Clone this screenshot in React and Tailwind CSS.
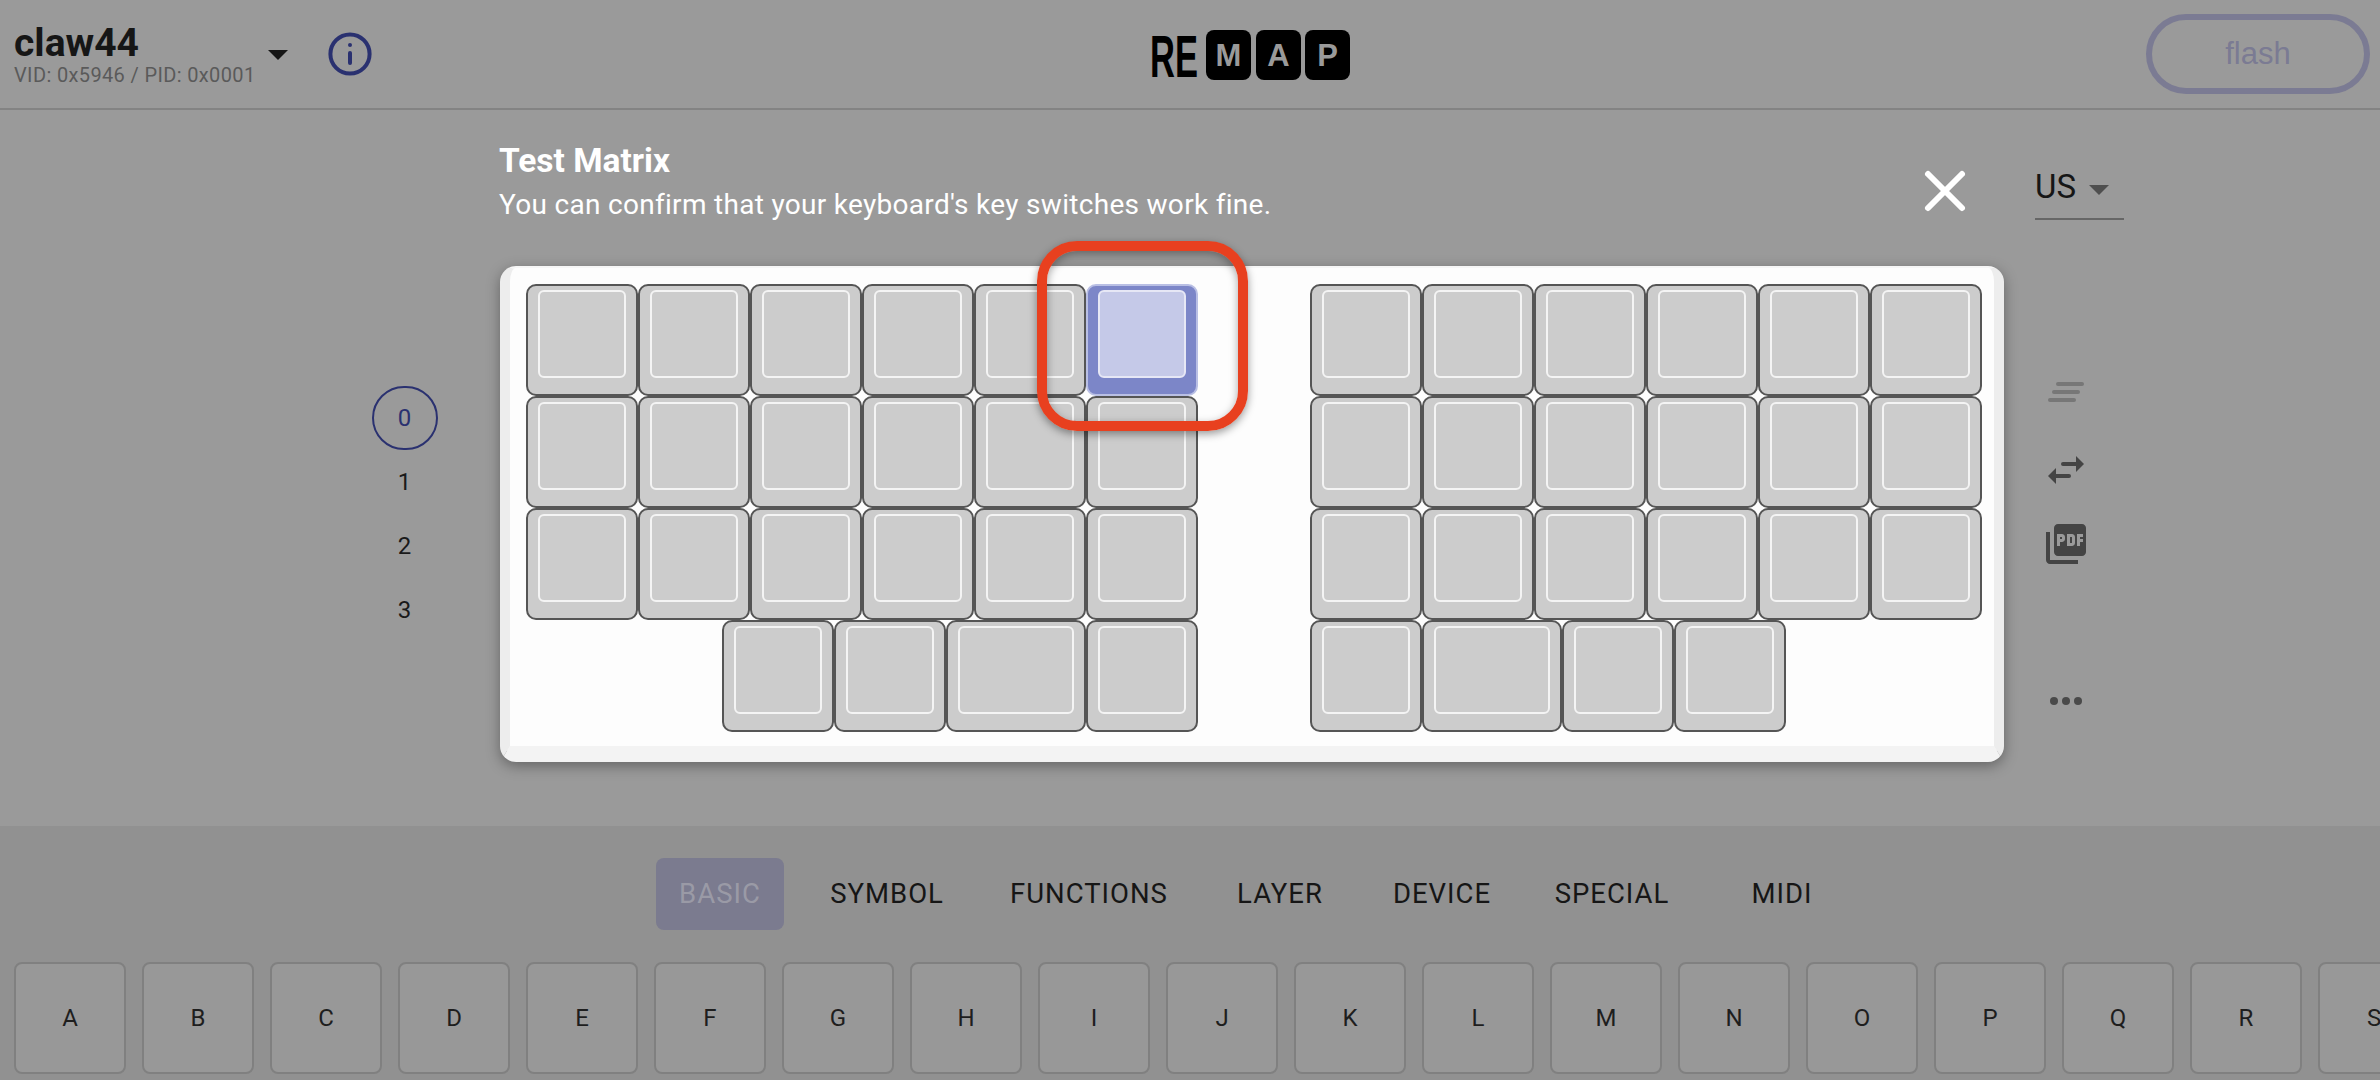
import React from 'react';
import { MdPictureAsPdf } from 'react-icons/md';

const FONT = { fontFamily: 'Roboto, "Noto Sans", sans-serif' };

const TABS = [
  { label: 'BASIC', w: 'w-[128px]', active: true },
  { label: 'SYMBOL', w: 'w-[206px]' },
  { label: 'FUNCTIONS', w: 'w-[198px]' },
  { label: 'LAYER', w: 'w-[184px]' },
  { label: 'DEVICE', w: 'w-[140px]' },
  { label: 'SPECIAL', w: 'w-[200px]' },
  { label: 'MIDI', w: 'w-[140px]' },
];

const LETTERS = 'ABCDEFGHIJKLMNOPQRS'.split('');

function Caret({ className, color = '#161616' }) {
  return (
    <svg width="20" height="10" viewBox="0 0 20 10" className={className}>
      <polygon points="0,0 20,0 10,10" fill={color} />
    </svg>
  );
}

function Key({ wide, lit }) {
  return (
    <div
      className={`flex h-[112px] shrink-0 justify-center rounded-[10px] pt-1 ${wide ? 'w-[140px]' : 'w-[112px]'} ${
        lit ? 'border-2 border-[#b9bfe4] bg-[#7c86c8]' : 'border-2 border-[#555555] bg-[#cccccc]'
      }`}
    >
      <div
        className={`h-[88px] rounded-[6px] border-2 ${wide ? 'w-[116px]' : 'w-[88px]'} ${
          lit ? 'border-[#e6e7f5] bg-[#c5c9e8]' : 'border-[#f4f4f4] bg-[#cccccc]'
        }`}
      />
    </div>
  );
}

function KeyRow({ keys, className = '' }) {
  return (
    <div className={`flex ${className}`}>
      {keys.map((k, i) => (
        <Key key={i} wide={k === 'w'} lit={k === 'l'} />
      ))}
    </div>
  );
}

function Logo() {
  return (
    <svg width="200" height="74" viewBox="0 -10 200 74" className="block">
      <text transform="translate(0 47) scale(0.575 1)" fontFamily="Liberation Sans" fontWeight="700" fontSize="60" fill="#000">
        RE
      </text>
      <rect x="56" y="0" width="45" height="50" rx="8" fill="#000" />
      <rect x="106" y="0" width="45" height="50" rx="8" fill="#000" />
      <rect x="155" y="0" width="45" height="50" rx="8" fill="#000" />
      <g fontFamily="Liberation Sans" fontWeight="700" fontSize="31" fill="#9a9a9a" textAnchor="middle">
        <text x="78.5" y="36">M</text>
        <text x="128.5" y="36">A</text>
        <text x="177.5" y="36">P</text>
      </g>
    </svg>
  );
}

export default function App() {
  return (
    <div className="relative flex h-[1080px] w-[2380px] flex-col overflow-hidden bg-[#9a9a9a]" style={FONT}>
      {/* header */}
      <header className="flex h-[110px] shrink-0 items-start border-b-2 border-[#838383] pl-[14px]">
        <div className="w-[254px] pt-[23px]">
          <div className="text-[39px] leading-[40px] font-bold text-[#161616]">claw44</div>
          <div className="text-[20px] leading-[24px] tracking-[0.36px] text-[#5a5a5a]">VID: 0x5946 / PID: 0x0001</div>
        </div>
        <Caret className="mt-[50px]" />
        <svg width="48" height="48" viewBox="0 0 24 24" fill="none" stroke="#2a3170" strokeWidth="2" strokeLinecap="round" className="mt-[30px] ml-[38px]">
          <circle cx="12" cy="12" r="9.8" />
          <path d="M12 11.5v5" />
          <path d="M12 7.5h.01" />
        </svg>
        <div className="mt-[20px] ml-[776px]">
          <Logo />
        </div>
        <button className="mt-[14px] ml-[796px] flex h-[80px] w-[224px] items-center justify-center rounded-[40px] border-[6px] border-[#7b7b93] text-[31px] text-[#7b7b93]" style={{ fontFamily: '"Liberation Sans", sans-serif' }}>
          flash
        </button>
      </header>

      {/* keymap area */}
      <main className="flex h-[716px] shrink-0">
        <div className="flex w-[500px] shrink-0 flex-col items-center pt-[276px] pl-[309px] text-[24px] text-[#1a1a1a]">
          <div className="flex h-[64px] w-[66px] items-center justify-center rounded-full border-2 border-[#2a3170] text-[#2a3170]">0</div>
          <div className="flex h-[64px] items-center">1</div>
          <div className="flex h-[64px] items-center">2</div>
          <div className="flex h-[64px] items-center">3</div>
        </div>

        <div className="w-[1504px] shrink-0">
          <div className="flex h-[156px] items-start justify-between">
            <div className="-ml-px pt-[33px]">
              <div className="text-[33.5px] leading-[36px] font-bold text-white">Test Matrix</div>
              <div className="mt-[8px] text-[28px] leading-[36px] tracking-[0.3px] text-white">You can confirm that your keyboard's key switches work fine.</div>
            </div>
            <svg width="44" height="44" viewBox="0 0 44 44" className="mt-[59px] mr-[37px]" stroke="#fff" strokeWidth="6" strokeLinecap="round">
              <path d="M5 5 L39 39 M39 5 L5 39" />
            </svg>
          </div>
          <div className="h-[496px] rounded-[16px] border-x-[10px] border-t-2 border-b-[16px] border-x-[#ededed] border-t-[#f6f6f6] border-b-[#f3f3f3] bg-[#fdfdfd] pt-4 pl-4 shadow-[0_4px_14px_rgba(0,0,0,0.35)]">
            <div className="flex gap-[112px]">
              <div className="w-[672px]">
                <KeyRow keys={['n', 'n', 'n', 'n', 'n', 'l']} />
                <KeyRow keys={['n', 'n', 'n', 'n', 'n', 'n']} />
                <KeyRow keys={['n', 'n', 'n', 'n', 'n', 'n']} />
                <KeyRow keys={['n', 'n', 'w', 'n']} className="justify-end" />
              </div>
              <div className="w-[672px]">
                <KeyRow keys={['n', 'n', 'n', 'n', 'n', 'n']} />
                <KeyRow keys={['n', 'n', 'n', 'n', 'n', 'n']} />
                <KeyRow keys={['n', 'n', 'n', 'n', 'n', 'n']} />
                <KeyRow keys={['n', 'w', 'n', 'n']} />
              </div>
            </div>
          </div>
        </div>

        <div className="w-[150px] shrink-0 pl-[31px]">
          <div className="mt-[52px] flex h-[58px] w-[89px] items-start border-b-2 border-[#666666] pt-px">
            <span className="text-[33px] leading-[48px] text-[#161616]">US</span>
            <Caret className="mt-[22px] ml-[13px]" color="#4f4f4f" />
          </div>
          <div className="mt-[161px] ml-[7px] flex w-[48px] flex-col items-center">
            <svg width="40" height="24" viewBox="0 0 40 24" stroke="#777777" strokeWidth="4" strokeLinecap="round">
              <path d="M12 3 H36 M8 11 H32 M4 19 H28" />
            </svg>
            <svg width="48" height="48" viewBox="0 0 24 24" fill="#444444" className="mt-[41px]">
              <path d="M7 11 3 15l4 4v-3h6.5a1 1 0 0 0 0-2H7v-3ZM21 9l-4-4v3h-6.5a1 1 0 0 0 0 2H17v3l4-4Z" />
            </svg>
            <MdPictureAsPdf size={48} color="#444444" className="mt-[26px]" />
            <svg width="48" height="12" viewBox="0 0 48 12" fill="#4a4a4a" className="mt-[127px]">
              <circle cx="12" cy="6" r="4" />
              <circle cx="24" cy="6" r="4" />
              <circle cx="36" cy="6" r="4" />
            </svg>
          </div>
        </div>
      </main>

      {/* key palette */}
      <section className="flex-1 bg-[#919191] pt-[32px]">
        <div className="flex pl-[656px]">
          {TABS.map((t) => (
            <div
              key={t.label}
              className={`flex h-[72px] items-center justify-center rounded-[8px] text-[27.5px] tracking-[1px] ${t.w} ${
                t.active ? 'bg-[#7b7b8f] text-[#9a9aa6]' : 'text-[#161616]'
              }`}
            >
              {t.label}
            </div>
          ))}
        </div>
        <div className="mt-[32px] flex gap-4 pl-[14px]">
          {LETTERS.map((c) => (
            <div key={c} className="flex h-[112px] w-[112px] shrink-0 items-center justify-center rounded-[8px] border-2 border-[#808080] bg-[#989898] text-[24px] text-[#1e1e1e]">
              {c}
            </div>
          ))}
        </div>
      </section>

      {/* tutorial highlight, lies over the key */}
      <div className="absolute top-[241px] left-[1037px] h-[190px] w-[211px] rounded-[40px] border-[10px] border-[#e8401f] shadow-[0_3px_8px_rgba(0,0,0,0.4),inset_0_3px_8px_rgba(0,0,0,0.35)]" />
    </div>
  );
}
